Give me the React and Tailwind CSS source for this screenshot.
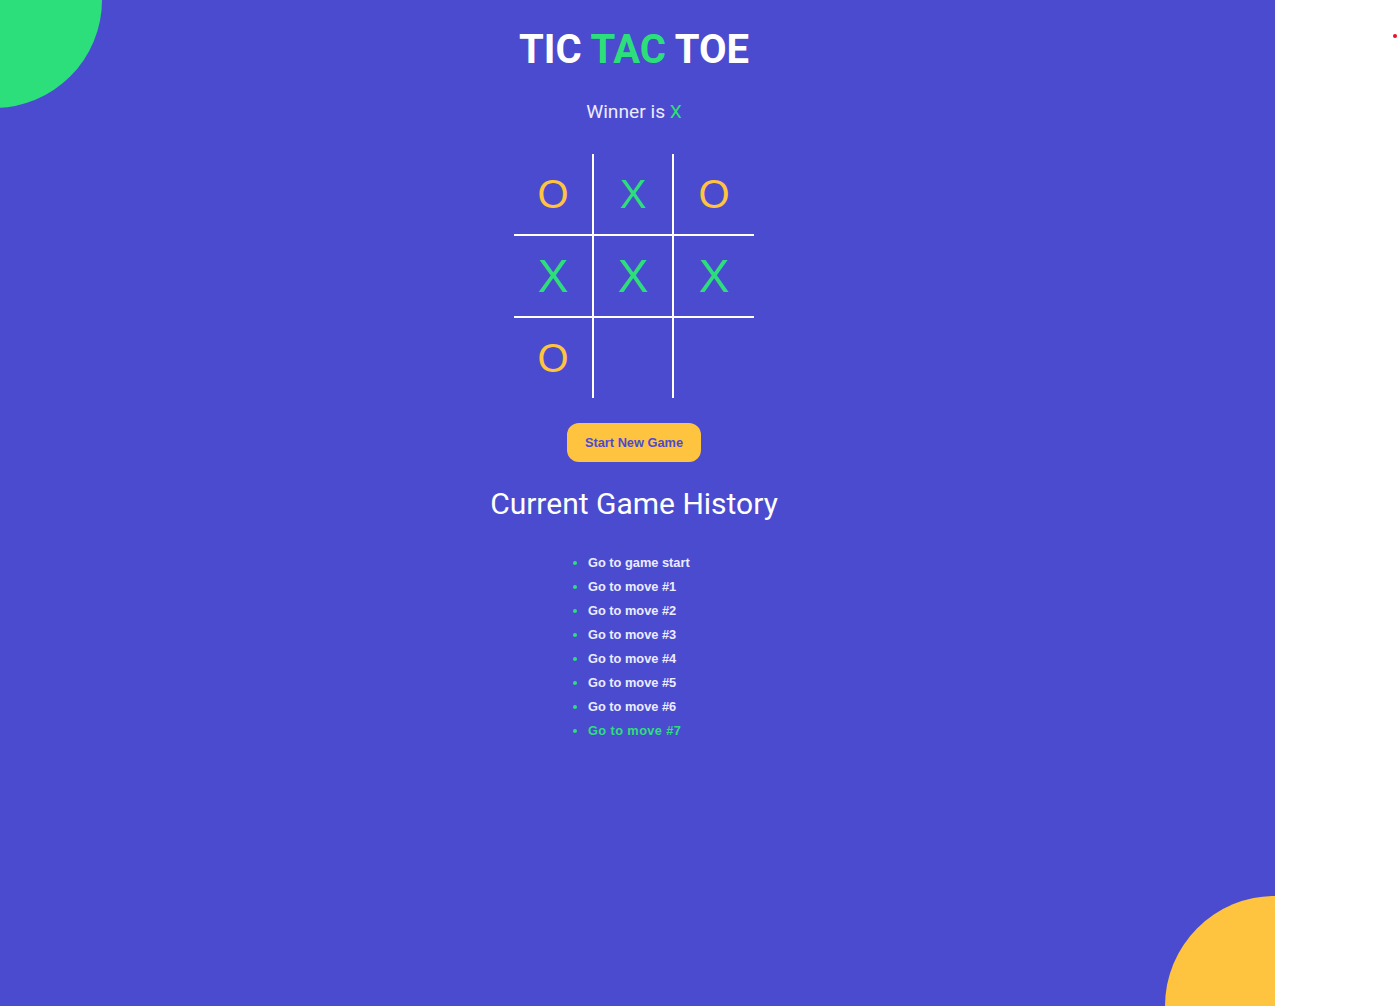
import React from "react";

const board = ["O", "X", "O", "X", "X", "X", "O", null, null];
const winLine = [3, 4, 5];
const moves = [
  "Go to game start",
  "Go to move #1",
  "Go to move #2",
  "Go to move #3",
  "Go to move #4",
  "Go to move #5",
  "Go to move #6",
  "Go to move #7",
];

const Square = ({ value, idx }) => {
  const col = idx % 3;
  const row = Math.floor(idx / 3);
  const winning = winLine.includes(idx);
  return (
    <div
      className={`flex items-center justify-center w-[80px] font-['Liberation_Sans',Arial,sans-serif] leading-none border-white ${
        winning ? "text-[46px]" : "text-[40px]"
      } ${row < 2 ? "h-[82px] border-b-2" : "h-[80px]"} ${col < 2 ? "border-r-2" : ""} ${
        value === "X" ? "text-[#2ddf7b]" : "text-[#ffc43f]"
      }`}
    >
      {value}
    </div>
  );
};

export default function App() {
  return (
    <div className="relative flex w-full h-[1006px] bg-white font-['Roboto',sans-serif] overflow-hidden">
      {/* Game area */}
      <main className="relative w-[1275px] h-full bg-[#4b4bd0] overflow-hidden">
        <div className="absolute -left-[114px] -top-[108px] w-[216px] h-[216px] rounded-full bg-[#2ddf7b]" />
        <div className="absolute left-[1165px] top-[896px] w-[220px] h-[220px] rounded-full bg-[#ffc43f]" />

        <div className="relative w-[1268px] flex flex-col items-center pt-[25px]">
          <h1 className="text-[40px] leading-[50px] font-bold text-white">
            TIC <span className="text-[#2ddf7b]">TAC</span> TOE
          </h1>

          <p className="mt-[23px] text-[19.2px] leading-[28px] text-[#ececff]">
            Winner is <span className="text-[#2ddf7b]">X</span>
          </p>

          <div className="mt-[28px] grid grid-cols-3 w-[240px]">
            {board.map((v, i) => (
              <Square key={i} value={v} idx={i} />
            ))}
          </div>

          <button className="mt-[25px] h-[39px] px-[18px] rounded-[12px] bg-[#ffc43f] font-['Liberation_Sans',Arial,sans-serif] text-[12.8px] font-bold text-[#4b4bd0]">
            Start New Game
          </button>

          <h2 className="mt-[24px] text-[30px] leading-[36px] text-white">Current Game History</h2>

          <ul className="mt-[29px] w-[120px] pl-[14px] list-disc marker:text-[#2ddf7b] font-['Liberation_Sans',Arial,sans-serif]">
            {moves.map((m, i) => (
              <li
                key={i}
                className={`text-[12.8px] leading-[24px] font-bold whitespace-nowrap ${
                  i === moves.length - 1 ? "text-[#2ddf7b] tracking-[0.4px]" : "text-[#ececff]"
                }`}
              >
                {m}
              </li>
            ))}
          </ul>
        </div>
      </main>

      <span className="absolute left-[1393px] top-[34px] w-[4px] h-[4px] rounded-full bg-[#e8102a]" />
    </div>
  );
}
